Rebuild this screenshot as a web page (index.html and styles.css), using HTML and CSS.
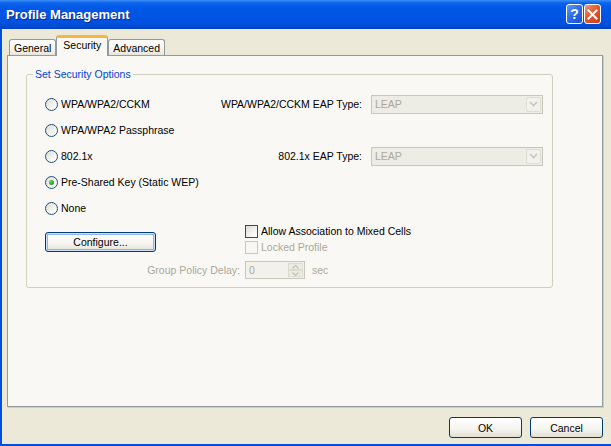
FILE: index.html
```html
<!DOCTYPE html>
<html>
<head>
<meta charset="utf-8">
<title>Profile Management</title>
<link rel="stylesheet" href="styles.css">
</head>
<body>
<div class="window">
  <div class="titlebar">
    <span class="title">Profile Management</span>
    <div class="tb-buttons">
      <span class="tb-btn help">?</span>
      <span class="tb-btn close">
        <svg width="11" height="11" viewBox="0 0 11 11"><path d="M1.5 1.5 L9.5 9.5 M9.5 1.5 L1.5 9.5" stroke="#fff" stroke-width="2" stroke-linecap="square"/></svg>
      </span>
    </div>
  </div>
  <div class="client">
    <div class="tabs">
      <div class="tab">General</div>
      <div class="tab active">Security</div>
      <div class="tab">Advanced</div>
    </div>
    <div class="panel">
      <fieldset class="group">
        <legend>Set Security Options</legend>
        <div class="opt">
          <label class="radio-wrap"><span class="radio"></span>WPA/WPA2/CCKM</label>
          <span class="eap-label">WPA/WPA2/CCKM EAP Type:</span>
          <div class="select"><span>LEAP</span><span class="drop"><svg width="9" height="6" viewBox="0 0 9 6"><path d="M1 1 L4.5 4.5 L8 1" fill="none" stroke="#C9C7BA" stroke-width="1.6"/></svg></span></div>
        </div>
        <div class="opt">
          <label class="radio-wrap"><span class="radio"></span>WPA/WPA2 Passphrase</label>
        </div>
        <div class="opt">
          <label class="radio-wrap"><span class="radio"></span>802.1x</label>
          <span class="eap-label">802.1x EAP Type:</span>
          <div class="select"><span>LEAP</span><span class="drop"><svg width="9" height="6" viewBox="0 0 9 6"><path d="M1 1 L4.5 4.5 L8 1" fill="none" stroke="#C9C7BA" stroke-width="1.6"/></svg></span></div>
        </div>
        <div class="opt">
          <label class="radio-wrap"><span class="radio on"></span>Pre-Shared Key (Static WEP)</label>
        </div>
        <div class="opt">
          <label class="radio-wrap"><span class="radio"></span>None</label>
        </div>
        <div class="lower">
          <button class="btn configure">Configure...</button>
          <label class="check-row r1"><span class="check"></span>Allow Association to Mixed Cells</label>
          <label class="check-row r2 disabled"><span class="check"></span>Locked Profile</label>
          <span class="gp-label">Group Policy Delay:</span>
          <div class="gp-value">
            <div class="spin"><span class="spin-text">0</span><span class="spin-btns"><span class="spin-up"><svg width="7" height="4" viewBox="0 0 7 4"><path d="M0.5 3.5 L3.5 0.5 L6.5 3.5" fill="none" stroke="#C4C2B4" stroke-width="1.2"/></svg></span><span class="spin-down"><svg width="7" height="4" viewBox="0 0 7 4"><path d="M0.5 0.5 L3.5 3.5 L6.5 0.5" fill="none" stroke="#C4C2B4" stroke-width="1.2"/></svg></span></span></div>
            <span class="sec">sec</span>
          </div>
        </div>
      </fieldset>
    </div>
    <div class="footer">
      <button class="btn">OK</button>
      <button class="btn">Cancel</button>
    </div>
  </div>
</div>
</body>
</html>
```
FILE: styles.css
```css
* { box-sizing: border-box; }
body {
  margin: 0;
  font-family: "Liberation Sans", Arial, sans-serif;
  font-size: 10.5px;
  color: #000;
  background: #ECE9D8;
}
.window {
  width: 611px;
  height: 446px;
  display: flex;
  flex-direction: column;
  background: #0050DA;
  overflow: hidden;
}
.titlebar {
  height: 29px;
  flex: none;
  display: flex;
  justify-content: space-between;
  align-items: flex-start;
  padding: 0 10px 0 6px;
  background: linear-gradient(to bottom, #3D8FF8 0px, #0C63EB 3px, #0058E6 8px, #0054E3 18px, #004FDB 25px, #0042BE 29px);
}
.title {
  color: #fff;
  font-weight: bold;
  font-size: 13px;
  line-height: 29px;
  text-shadow: 1px 1px 0 #0A2A8A;
}
.tb-buttons {
  display: flex;
  gap: 1px;
  margin-top: 4px;
}
.tb-btn {
  width: 17px;
  height: 20px;
  border: 1px solid #fff;
  border-radius: 3px;
  display: flex;
  align-items: center;
  justify-content: center;
  color: #fff;
  font-weight: bold;
  font-size: 14px;
}
.help {
  background: linear-gradient(135deg, #5D9BF8 0%, #2A6BEA 50%, #1850D5 100%);
}
.close {
  background: linear-gradient(135deg, #F09A7C 0%, #E2582F 45%, #C8401A 100%);
}
.client {
  flex: 1;
  margin-left: 2px;
  margin-bottom: 2px;
  background: #ECE9D8;
  display: flex;
  flex-direction: column;
  padding: 6px 8px 0 5px;
}
.tabs {
  display: flex;
  align-items: flex-end;
  height: 20px;
  padding-left: 2px;
}
.tab {
  height: 16px;
  padding: 0 4px;
  border: 1px solid #919B9C;
  border-bottom: none;
  border-radius: 3px 3px 0 0;
  background: linear-gradient(to bottom, #FFFFFF, #F3F2EC 70%, #E6E4DA);
  display: flex;
  align-items: center;
}
.tab.active {
  height: 21px;
  margin-bottom: -1px;
  padding: 1px 6px 0;
  border-top: 3px solid #F7B63E;
  background: #F9F8F5;
  position: relative;
  z-index: 1;
  align-items: flex-start;
}
.panel {
  height: 352px;
  border: 1px solid #919B9C;
  background: #F9F8F5;
  padding-left: 18px;
  box-shadow: 1px 1px 0 #D0CEBF;
}
.group {
  margin: 12px 0 0 0;
  width: 527px;
  padding: 10px 0 5px 18px;
  border: 1px solid #D0D0BF;
  border-radius: 3px;
  min-inline-size: 0;
}
.group legend {
  color: #0046D5;
  line-height: 13px;
  padding: 0 2px;
  margin-left: -12px;
}
.opt {
  display: flex;
  align-items: center;
  height: 26px;
}
.radio-wrap {
  display: flex;
  align-items: center;
  gap: 3px;
  width: 165px;
}
.radio {
  width: 13px;
  height: 13px;
  border-radius: 50%;
  border: 1px solid #1C5180;
  background: linear-gradient(135deg, #DCDCD7 0%, #F4F4F0 60%, #FFFFFF 100%);
  display: flex;
  align-items: center;
  justify-content: center;
  flex: none;
}
.radio.on::after {
  content: "";
  width: 5px;
  height: 5px;
  border-radius: 50%;
  background: radial-gradient(circle at 35% 35%, #5ED35E, #21A121 70%);
}
.eap-label {
  width: 152px;
  text-align: right;
  margin-right: 9px;
}
.select {
  width: 172px;
  height: 19px;
  border: 1px solid #C9C7BA;
  background: #EEEDE5;
  color: #ACA899;
  display: flex;
  align-items: center;
  padding-left: 3px;
}
.drop {
  margin-left: auto;
  margin-right: 1px;
  width: 15px;
  height: 15px;
  border: 1px solid #E0DED3;
  border-radius: 2px;
  background: #F2F1EB;
  display: flex;
  align-items: center;
  justify-content: center;
}
.lower {
  display: grid;
  grid-template-columns: 200px auto;
  grid-template-rows: 16px 16px 3px 24px;
  margin-top: 2px;
}
.btn {
  font-family: inherit;
  font-size: 10.5px;
  color: #000;
  height: 21px;
  border: 1px solid #003C74;
  border-radius: 3px;
  background: linear-gradient(to bottom, #FFFFFF 0%, #F5F4EF 60%, #E3E0D4 100%);
  padding: 0;
}
.configure {
  grid-column: 1;
  grid-row: 1 / span 2;
  align-self: start;
  margin-top: 9px;
  width: 111px;
  height: 20px;
  box-shadow: inset 0 0 0 1px #CEE1FB, inset 0 0 0 2px #8FB3EC;
}
.check-row {
  grid-column: 2;
  display: flex;
  align-items: center;
  gap: 3px;
}
.check-row.r1 { grid-row: 1; }
.check-row.r2 { grid-row: 2; }
.check {
  width: 13px;
  height: 13px;
  border: 1px solid #1C5180;
  background: linear-gradient(135deg, #DCDCD7 0%, #F4F4F0 60%, #FFFFFF 100%);
  flex: none;
}
.disabled { color: #ACA899; }
.disabled .check {
  border-color: #CAC8BB;
  background: #F8F7F3;
}
.gp-label {
  grid-column: 1;
  grid-row: 4;
  align-self: center;
  text-align: right;
  padding-right: 5px;
  color: #ACA899;
}
.gp-value {
  grid-column: 2;
  grid-row: 4;
  display: flex;
  align-items: center;
}
.spin {
  width: 60px;
  height: 18px;
  border: 1px solid #C9C7BA;
  background: #F2F1EC;
  display: flex;
  align-items: center;
  padding-left: 3px;
  color: #ACA899;
}
.spin-btns {
  margin-left: auto;
  margin-right: 1px;
  width: 15px;
  height: 14px;
  display: flex;
  flex-direction: column;
}
.spin-up, .spin-down {
  flex: 1;
  background: #EDECE4;
  border: 1px solid #DEDCD1;
  display: flex;
  align-items: center;
  justify-content: center;
}
.sec {
  margin-left: 7px;
  color: #ACA899;
}
.footer {
  display: flex;
  justify-content: flex-end;
  gap: 8px;
  padding-top: 10px;
}
.footer .btn {
  width: 73px;
  height: 21px;
}
```
